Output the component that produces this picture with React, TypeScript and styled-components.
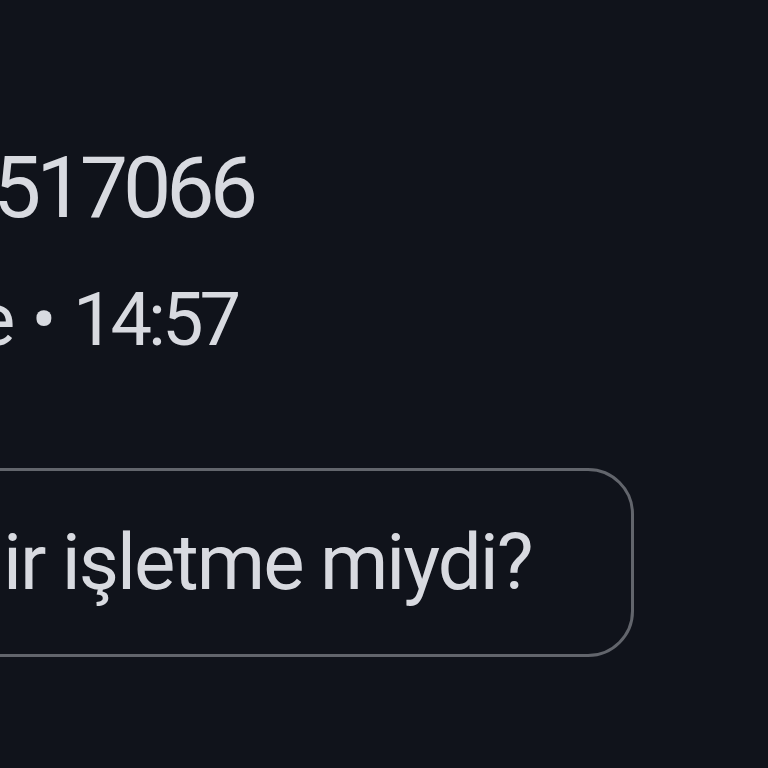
import styled, { createGlobalStyle } from "styled-components";

const GlobalStyle = createGlobalStyle`
  html, body {
    margin: 0;
    padding: 0;
    background: #10131b;
  }
  body {
    font-family: Roboto, "Noto Sans", "Liberation Sans", sans-serif;
    color: #d8dae0;
  }
`;

const Page = styled.div`
  width: 768px;
  height: 768px;
  overflow: hidden;
  background: #10131b;
  display: flex;
  flex-direction: column;
  padding-top: 140px;
  box-sizing: border-box;
`;

const Number = styled.div`
  font-size: 86px;
  line-height: 96px;
  letter-spacing: -5px;
  margin-left: -7px;
  white-space: nowrap;
`;

const Meta = styled.div`
  font-size: 74px;
  line-height: 84px;
  letter-spacing: -4px;
  word-spacing: 6px;
  margin-top: 42px;
  margin-left: -24px;
  white-space: nowrap;
`;

const AnswerButton = styled.button`
  margin-top: 106px;
  margin-left: -80px;
  width: 714px;
  height: 189px;
  box-sizing: border-box;
  border: 3px solid #62656c;
  border-radius: 46px;
  background: transparent;
  color: #d8dae0;
  font-family: inherit;
  font-size: 78px;
  letter-spacing: -2px;
  text-align: left;
  padding: 0 0 0 80px;
  white-space: nowrap;
`;

export default function App() {
  return (
    <>
      <GlobalStyle />
      <Page>
        <Number>517066</Number>
        <Meta>e • 14:57</Meta>
        <AnswerButton>ir işletme miydi?</AnswerButton>
      </Page>
    </>
  );
}
